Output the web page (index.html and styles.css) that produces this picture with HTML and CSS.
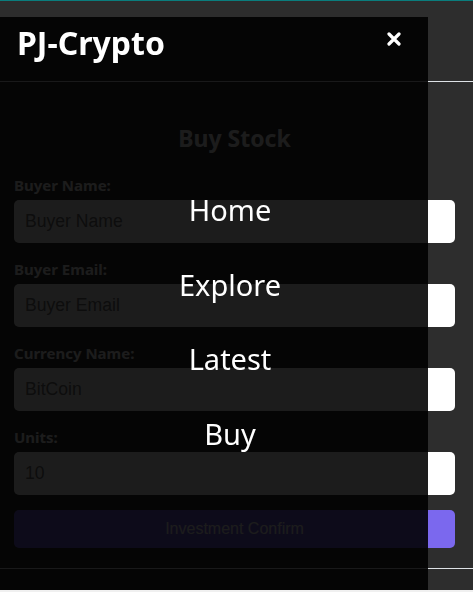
FILE: index.html
```html
<!DOCTYPE html>
<html lang="en">
<head>
<meta charset="utf-8">
<title>PJ-Crypto</title>
<link rel="stylesheet" href="styles.css">
</head>
<body>
<div class="page">
  <header class="navbar"></header>
  <main class="main">
    <h2 class="title">Buy Stock</h2>
    <form class="form">
      <div class="group">
        <label class="label">Buyer Name:</label>
        <input class="input" type="text" placeholder="Buyer Name">
      </div>
      <div class="group">
        <label class="label">Buyer Email:</label>
        <input class="input" type="email" placeholder="Buyer Email">
      </div>
      <div class="group">
        <label class="label">Currency Name:</label>
        <input class="input" type="text" placeholder="BitCoin">
      </div>
      <div class="group">
        <label class="label">Units:</label>
        <input class="input" type="number" placeholder="10">
      </div>
      <button class="submit" type="button">Investment Confirm</button>
    </form>
  </main>
  <footer class="footer"></footer>
</div>
<aside class="offcanvas">
  <div class="oc-header">
    <h5 class="oc-title">PJ-Crypto</h5>
    <button class="oc-close" type="button" aria-label="Close">
      <svg width="14" height="14" viewBox="0 0 14 14"><path d="M2 2L12 12M12 2L2 12" stroke="#fff" stroke-width="3.2" stroke-linecap="round" fill="none"/></svg>
    </button>
  </div>
  <div class="oc-body">
    <ul class="menu">
      <li class="menu-item">Home</li>
      <li class="menu-item">Explore</li>
      <li class="menu-item">Latest</li>
      <li class="menu-item">Buy</li>
    </ul>
  </div>
</aside>
</body>
</html>
```
FILE: styles.css
```css
html, body {
  margin: 0;
  padding: 0;
}
body {
  background: #f0f0f0;
  font-family: "Noto Sans", "Open Sans", sans-serif;
  height: 592px;
  overflow: hidden;
}
.page {
  background: #2d2d2d;
  height: 590px;
  display: flex;
  flex-direction: column;
}
.navbar {
  height: 80px;
  border-top: 1px solid #0a7d7d;
  border-bottom: 1px solid #dee2e6;
  flex: none;
}
.main {
  height: 486px;
  box-sizing: border-box;
  padding: 43px 18px 0 14px;
  flex: none;
}
.title {
  margin: 0 0 24px;
  text-align: center;
  color: #fff;
  font-size: 23px;
  font-weight: 700;
  line-height: 26px;
}
.form {
  display: flex;
  flex-direction: column;
}
.group {
  display: flex;
  flex-direction: column;
  margin-bottom: 16px;
}
.group:last-of-type {
  margin-bottom: 15px;
}
.label {
  color: #fff;
  font-size: 15px;
  font-weight: 700;
  line-height: 20px;
  margin-bottom: 5px;
}
.input {
  height: 43px;
  box-sizing: border-box;
  border: none;
  border-radius: 5px;
  background: #fff;
  padding: 0 11px;
  font-family: "Liberation Sans", Arial, sans-serif;
  font-size: 17.6px;
  color: #333;
  margin: 0;
}
.input::placeholder {
  color: #757575;
}
.submit {
  height: 38px;
  border: none;
  border-radius: 5px;
  background: #7b68ee;
  color: #fff;
  font-family: "Liberation Sans", Arial, sans-serif;
  font-size: 16px;
  padding: 0;
  margin: 0;
}
.footer {
  flex: 1;
  border-top: 1px solid #dee2e6;
}
.offcanvas {
  position: fixed;
  left: 0;
  top: 17px;
  width: 428px;
  height: 573px;
  background: rgba(0, 0, 0, 0.89);
  display: flex;
  flex-direction: column;
}
.oc-header {
  height: 64px;
  box-sizing: border-box;
  padding: 7px 16px 0 17px;
  display: flex;
  justify-content: space-between;
  align-items: flex-start;
}
.oc-title {
  margin: 0;
  color: #fff;
  font-size: 32px;
  font-weight: 700;
  line-height: 37px;
}
.oc-close {
  width: 14px;
  height: 14px;
  padding: 0;
  margin: 8px 11px 0 0;
  border: none;
  background: transparent;
  display: flex;
}
.oc-body {
  padding: 92px 16px 16px;
}
.menu {
  list-style: none;
  margin: 0;
  padding: 0 0 0 32px;
  text-align: center;
}
.menu-item {
  color: #fff;
  font-size: 29px;
  line-height: 74.7px;
}
```
